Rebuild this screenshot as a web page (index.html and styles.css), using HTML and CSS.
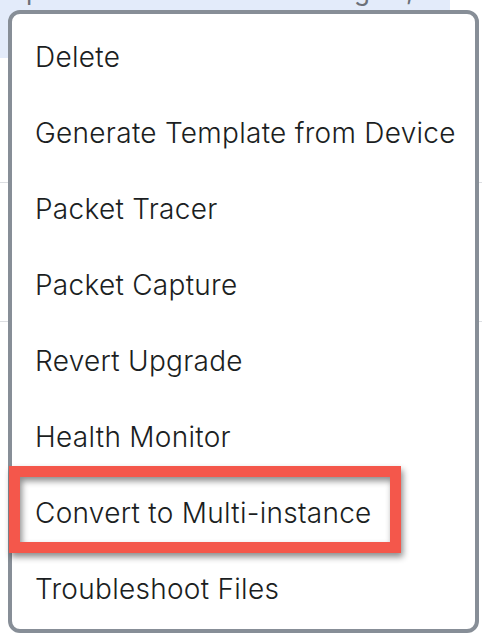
FILE: index.html
```html
<!DOCTYPE html>
<html>
<head>
<meta charset="utf-8">
<link rel="stylesheet" href="styles.css">
</head>
<body>
<div class="page">
  <div class="strip">
    <div class="strip-text"><span class="s1">p</span><span class="s2">g</span><span class="s3">,</span></div>
  </div>
  <div class="table">
    <div class="trow r1"></div>
    <div class="trow r2"></div>
    <div class="trow r3"></div>
  </div>

  <div class="menu">
    <div class="item">Delete</div>
    <div class="item">Generate Template from Device</div>
    <div class="item">Packet Tracer</div>
    <div class="item">Packet Capture</div>
    <div class="item">Revert Upgrade</div>
    <div class="item">Health Monitor</div>
    <div class="item">Convert to Multi-instance</div>
    <div class="item">Troubleshoot Files</div>
  </div>

  <div class="highlight"></div>
</div>
</body>
</html>
```

FILE: styles.css
```css
html, body {
  margin: 0;
  padding: 0;
  background: #ffffff;
}
.page {
  position: relative;
  width: 482px;
  height: 636px;
  overflow: hidden;
  font-family: Inter, "Noto Sans", sans-serif;
}
.strip {
  width: 450px;
  height: 58px;
  background: #e3ebfa;
  overflow: hidden;
}
.strip-text {
  display: flex;
  margin-top: -22px;
  font-size: 26px;
  line-height: 26px;
  color: #6b7079;
}
.s1 { margin-left: 26px; }
.s2 { margin-left: 312px; }
.s3 { margin-left: 36px; }
.table {
  display: flex;
  flex-direction: column;
}
.trow {
  border-bottom: 1px solid #dcdee2;
}
.r1 { height: 124px; }
.r2 { height: 138px; }
.r3 { height: 200px; border-bottom: none; }

.menu {
  position: absolute;
  left: 8px;
  top: 10px;
  width: 463px;
  height: 608px;
  border: 4px solid #878e97;
  border-radius: 12px;
  background: #ffffff;
  padding: 5px 0 2px 0;
  display: flex;
  flex-direction: column;
}
.item {
  height: 76px;
  display: flex;
  align-items: center;
  padding-left: 23px;
  font-size: 28px;
  font-weight: 300;
  letter-spacing: 0.28px;
  color: #1b1e22;
  white-space: nowrap;
}
.highlight {
  position: absolute;
  left: 9px;
  top: 466px;
  width: 370px;
  height: 65px;
  border: 11px solid #f4574b;
  filter: drop-shadow(2px 4px 3px rgba(0, 0, 0, 0.45));
}
```
